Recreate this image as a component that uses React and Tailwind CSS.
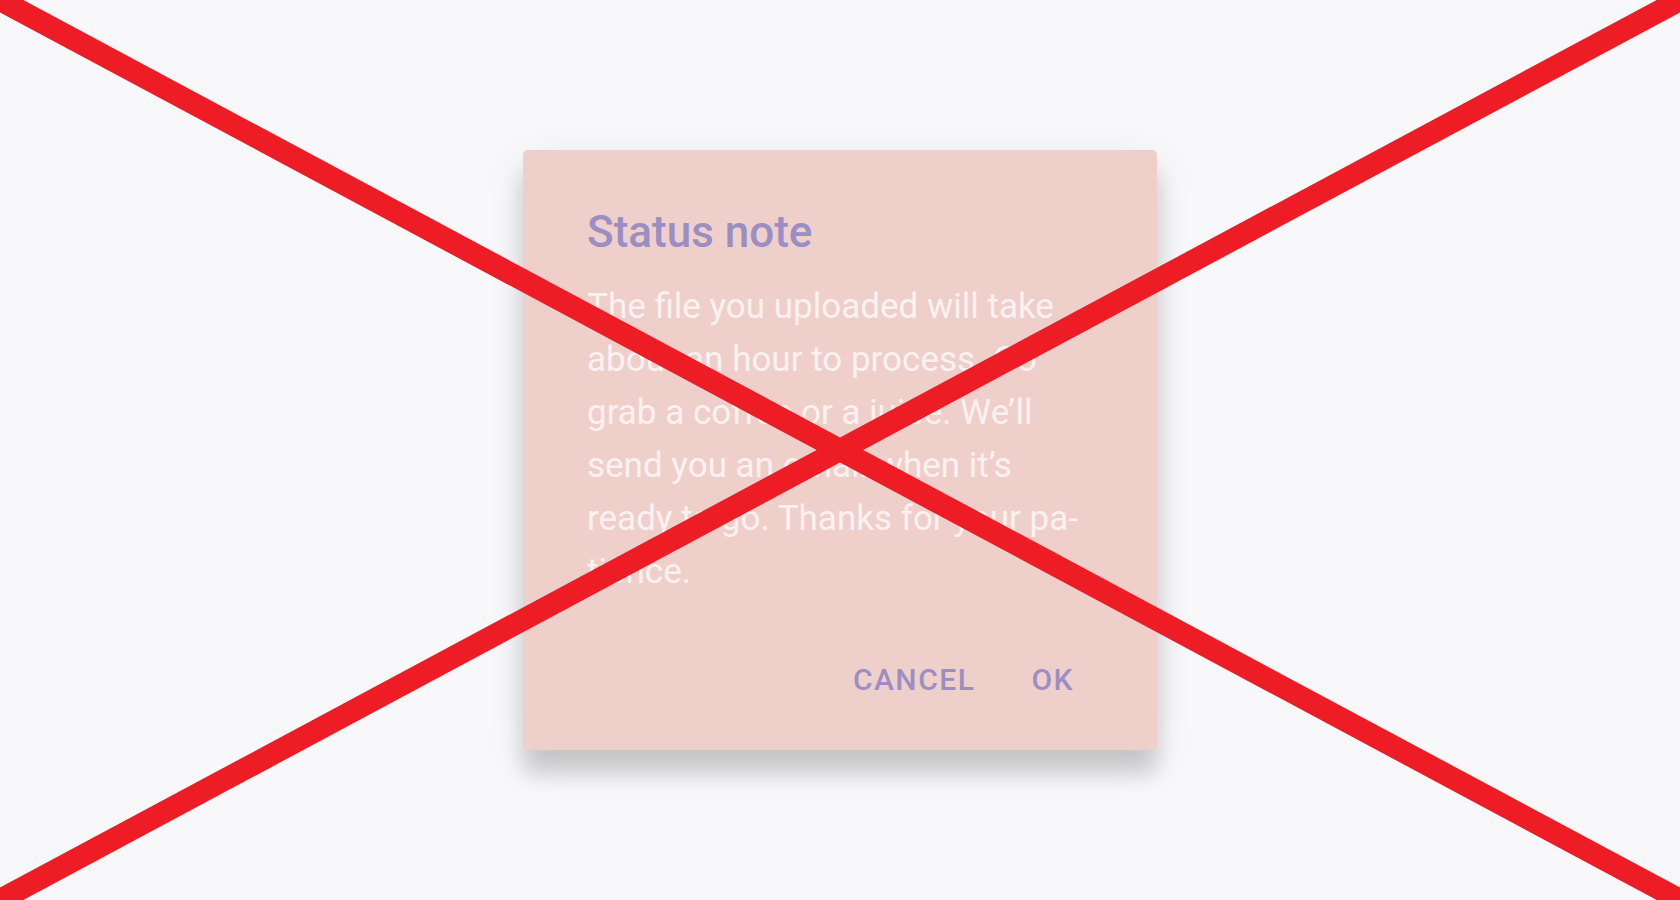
export default function App() {
  return (
    <div
      className="relative flex h-screen w-full items-center justify-center overflow-hidden bg-[#f8f8fa]"
      style={{ fontFamily: "Roboto, 'Noto Sans', sans-serif" }}
    >
      {/* dialog card */}
      <div className="flex h-[600px] w-[634px] flex-col rounded-[5px] bg-[#efcfca] pl-16 pt-[56px] shadow-[0_24px_22px_rgba(0,0,0,0.16),0_10px_40px_rgba(0,0,0,0.08)]">
        <h2 className="text-[44px] font-medium leading-[52px] text-[#9a8ec4]">
          Status note
        </h2>
        <p className="mt-[22px] w-[505px] text-[35px] leading-[53px] text-[#fbf1f1]">
          The file you uploaded will take about an hour to process. Go grab a
          coffee or a juice. We’ll send you an email when it’s ready to go.
          Thanks for your pa{"\u00AD"}tience.
        </p>
        <div className="mt-auto flex justify-end gap-14 pb-[52px] pr-[83px] text-[30px] font-medium leading-[36px] tracking-[1.5px] text-[#9a8ec4]">
          <button>CANCEL</button>
          <button>OK</button>
        </div>
      </div>

      {/* crossed-out overlay */}
      <svg
        className="pointer-events-none absolute inset-0 h-full w-full"
        viewBox="0 0 1680 900"
        preserveAspectRatio="none"
      >
        <line x1="0" y1="0" x2="1680" y2="900" stroke="#ee1c25" strokeWidth="22" />
        <line x1="1680" y1="0" x2="0" y2="900" stroke="#ee1c25" strokeWidth="22" />
      </svg>
    </div>
  );
}
